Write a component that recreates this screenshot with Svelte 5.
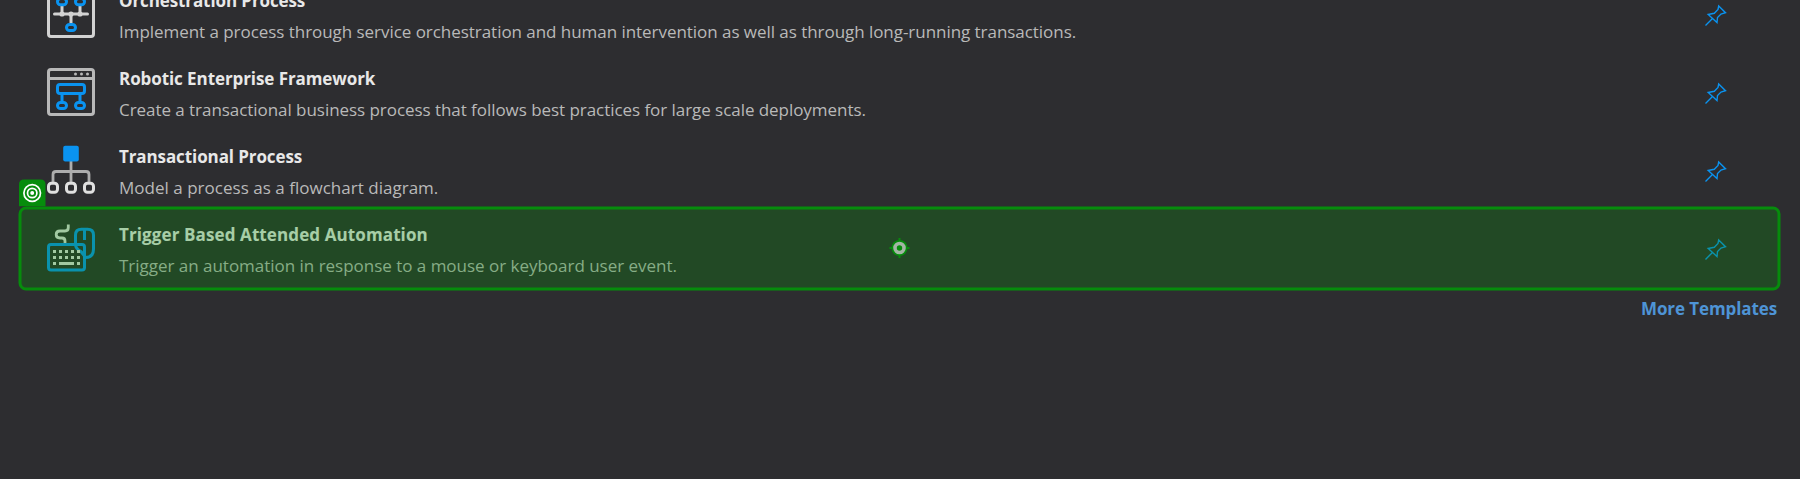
<script>
  const rows = [
    { icon: 'orchestration', title: 'Orchestration Process', ts: -0.1, desc: 'Implement a process through service orchestration and human intervention as well as through long-running transactions.', ds: -0.045 },
    { icon: 'framework', title: 'Robotic Enterprise Framework', ts: -0.08, desc: 'Create a transactional business process that follows best practices for large scale deployments.', ds: -0.05 },
    { icon: 'flowchart', title: 'Transactional Process', ts: -0.1, desc: 'Model a process as a flowchart diagram.', ds: 0.02 },
    { icon: 'trigger', title: 'Trigger Based Attended Automation', ts: 0.11, desc: 'Trigger an automation in response to a mouse or keyboard user event.', ds: -0.02 },
  ];
</script>

<main>
  <ul>
    {#each rows as row}
      <li>
        <svg class="icon" width="48" height="48" viewBox="0 0 48 48" fill="none" stroke-width="3">
          {#if row.icon === 'orchestration'}
            <g stroke="#d2d2d2">
              <rect x="1.5" y="1.5" width="45" height="45" rx="2.5" />
              <path d="M7.5 24h33M15 16v8M33 16v8M24 24v9" stroke-linecap="round" />
            </g>
            <g fill="#d2d2d2"><circle cx="15" cy="24" r="2.6" /><circle cx="24" cy="24" r="2.6" /><circle cx="33" cy="24" r="2.6" /></g>
            <g stroke="#0a93f0">
              <rect x="10.5" y="8.5" width="9" height="6.2" rx="3" />
              <rect x="28.5" y="8.5" width="9" height="6.2" rx="3" />
              <rect x="19.5" y="34.5" width="9" height="6" rx="3" />
            </g>
          {:else if row.icon === 'framework'}
            <g stroke="#b8b8b8">
              <rect x="1.5" y="1.5" width="45" height="45" rx="2.5" />
              <path d="M2 10.5h44" />
            </g>
            <g fill="#b8b8b8"><circle cx="28.5" cy="6" r="1.5" /><circle cx="34.5" cy="6" r="1.5" /><circle cx="40.5" cy="6" r="1.5" /></g>
            <g stroke="#0a93f0">
              <rect x="10.5" y="16.5" width="27" height="9" rx="2.5" />
              <path d="M15 26v8M33 26v8" />
              <rect x="10.5" y="34.5" width="9" height="6" rx="3" />
              <rect x="28.5" y="34.5" width="9" height="6" rx="3" />
            </g>
          {:else if row.icon === 'flowchart'}
            <path d="M24 15v21M6 36v-7.500q0-3 3-3h30q3 0 3 3V36" stroke="#adadad" stroke-width="2.800" />
            <rect x="16.200" y="-0.200" width="15.600" height="15.600" rx="2" fill="#0a93f0" />
            <g stroke="#e0e0e0">
              <rect x="1.500" y="37.300" width="9" height="9" rx="3" />
              <rect x="19.500" y="37.300" width="9" height="9" rx="3" />
              <rect x="37.500" y="37.300" width="9" height="9" rx="3" />
            </g>
          {:else}
            <path d="M21.300 0.500V3.500Q21.300 7 18 7H13Q9.200 7 9.200 10.500T13 14H15Q18 14 18 17V20" stroke="#e0e0e0" stroke-width="2.800" />
            <g stroke="#0a93f0">
              <rect x="1.500" y="20.500" width="36" height="25.500" rx="2.500" />
              <path d="M28.500 20V11q0-5.800 6-5.800h6q6 0 6 5.800V25q0 8.500-8 8.500Q36 30 34 27.500Q28.500 25 28.500 20M37.500 6v10" />
            </g>
            <g fill="#e0e0e0">
              {#each [6, 12, 18, 24, 30] as x}
                <rect {x} y="26" width="3" height="3" />
                <rect {x} y="32" width="3" height="3" />
              {/each}
              <rect x="6" y="38" width="3" height="3" /><rect x="12" y="38" width="15" height="3" /><rect x="30" y="38" width="3" height="3" />
            </g>
          {/if}
        </svg>
        <div class="copy">
          <h3 style="letter-spacing:{row.ts}px">{row.title}</h3>
          <p style="letter-spacing:{row.ds}px">{row.desc}</p>
        </div>
        <svg class="pin" width="24" height="24" viewBox="0 0 24 24" fill="none" stroke="#0a93f0" stroke-width="1.400">
          <path d="M14.700 2L21.500 8.700 17 10 13.500 13.500 13 18.500 4.200 10.500 10.300 9.300 14 5.500ZM8.500 14.400L1.500 21.400" />
        </svg>
      </li>
    {/each}
  </ul>
  <a href="#more">More Templates</a>

  <svg class="highlight" width="1800" height="479" viewBox="0 0 1800 479">
    <path d="M19 206.300V184.500q0-5 5-5H40.500q5 0 5 5V206.300Z" fill="#068c0c" />
    <g fill="none" stroke="#fff" stroke-width="1.700">
      <circle cx="32.200" cy="193" r="8.300" /><circle cx="32.200" cy="193" r="4.700" />
    </g>
    <circle cx="32.200" cy="193" r="2" fill="#fff" />
    <rect x="20" y="208" width="1759" height="81" rx="6" fill="#0a900c" fill-opacity="0.290" />
    <rect x="20" y="208" width="1759" height="81" rx="6" fill="none" stroke="#068c0c" stroke-width="3" />
    <path d="M899.500 238v20M889.500 248h20" stroke="#068c0c" stroke-width="2" />
    <circle cx="899.500" cy="248" r="8" fill="#068c0c" />
    <circle cx="899.500" cy="248" r="4.500" fill="none" stroke="#a3b5a4" stroke-width="3.600" />
  </svg>
</main>

<style>
  :global(body) { margin: 0; background: #2d2d30; }
  main {
    position: relative;
    width: 1800px;
    height: 479px;
    box-sizing: border-box;
    overflow: hidden;
    background: #2d2d30;
    font-family: "Open Sans", "Noto Sans", sans-serif;
    font-size: 17px;
    display: flex;
    flex-direction: column;
  }
  ul { list-style: none; margin: -25px 0 0; padding: 0; }
  li { height: 78px; display: flex; align-items: flex-start; padding: 10px 72px 0 47px; box-sizing: border-box; }
  .icon { flex: none; overflow: visible; margin-top: 5px; }
  .copy { flex: 1; margin-left: 24px; white-space: nowrap; }
  h3, p { margin: 0; font-size: 17px; line-height: 31px; }
  h3 { font-weight: 700; color: #e8e8e8; }
  p { font-weight: 400; color: #b9b9b9; }
  .pin { flex: none; margin-top: 19px; }
  a { align-self: flex-end; margin: 6px 23px 0 0; line-height: 31px; font-weight: 700; letter-spacing: -0.1px; color: #4e94d6; text-decoration: none; }
  .highlight { position: absolute; left: 0; top: 0; }
</style>
